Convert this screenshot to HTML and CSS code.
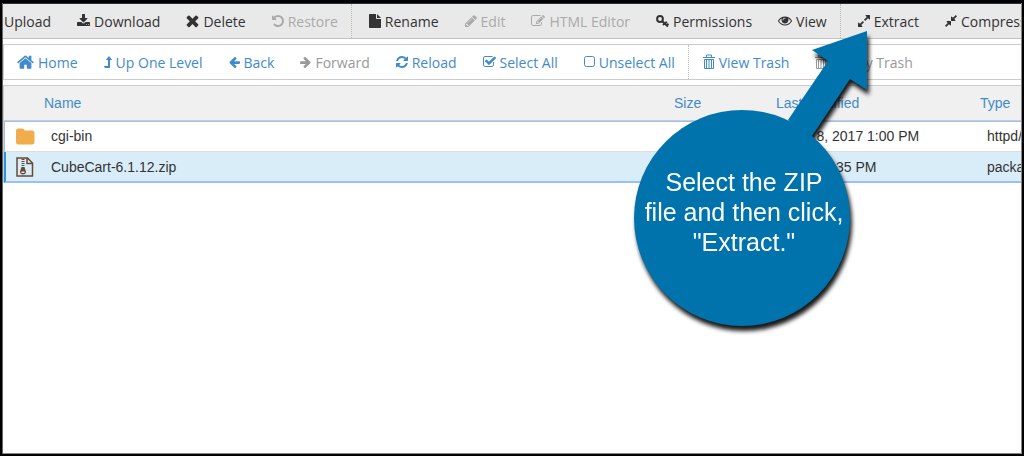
FILE: index.html
```
<!DOCTYPE html>
<html lang="en">

<head>
    <meta charset="UTF-8">
    <meta name="viewport" content="width=device-width, initial-scale=1.0">
    <title>File Manager</title>
    <link rel="stylesheet" href="styles.css">
</head>

<body>
    <div class="frame">
        <div class="toolbar">
            <button class="first">Upload</button>
            <button><svg width="13" height="14" viewBox="64 0 1664 1792"><path d="M1344 1344q0-26-19-45t-45-19-45 19-19 45 19 45 45 19 45-19 19-45zm256 0q0-26-19-45t-45-19-45 19-19 45 19 45 45 19 45-19 19-45zm128-224v320q0 40-28 68t-68 28h-1472q-40 0-68-28t-28-68v-320q0-40 28-68t68-28h465l135 136q58 56 136 56t136-56l136-136h464q40 0 68 28t28 68zm-325-569q17 41-14 70l-448 448q-18 19-45 19t-45-19l-448-448q-31-29-14-70 17-39 59-39h256v-448q0-26 19-45t45-19h256q26 0 45 19t19 45v448h256q42 0 59 39z"/></svg>Download</button>
            <button><svg width="13" height="14" viewBox="240 220 1312 1412"><path d="M1490 1322q0 40-28 68l-136 136q-28 28-68 28t-68-28l-294-294-294 294q-28 28-68 28t-68-28l-136-136q-28-28-28-68t28-68l294-294-294-294q-28-28-28-68t28-68l136-136q28-28 68-28t68 28l294 294 294-294q28-28 68-28t68 28l136 136q28 28 28 68t-28 68l-294 294 294 294q28 28 28 68z"/></svg>Delete</button>
            <button disabled><svg width="12" height="14" viewBox="128 0 1536 1792"><path d="M1664 896q0 156-61 298t-164 245-245 164-298 61q-172 0-327-72.5t-264-204.5q-7-10-6.5-22.5t8.5-20.5l137-138q10-9 25-9 16 2 23 12 73 95 179 147t225 52q104 0 198.5-40.5t163.5-109.5 109.5-163.5 40.5-198.5-40.5-198.5-109.5-163.5-163.5-109.5-198.5-40.5q-98 0-188 35.5t-160 101.5l137 138q31 30 14 69-17 40-59 40h-448q-26 0-45-19t-19-45v-448q0-42 40-59 39-17 69 14l130 129q107-101 244.5-156.5t284.5-55.5q156 0 298 61t245 164 164 245 61 298z"/></svg>Restore</button>
            <span class="divider"></span>
            <button><svg width="12" height="14" viewBox="0 0 12 14"><path d="M0 .8Q0 0 .8 0H7v4.200q0 .8.8.8H12v8.200q0 .8-.8.8H.8Q0 14 0 13.200zM8 0l4 4H8z"/></svg>Rename</button>
            <button disabled><svg width="12" height="14" viewBox="128 0 1536 1792"><path d="M491 1536l91-91-235-235-91 91v107h128v128h107zm523-928q0-22-22-22-10 0-17 7l-542 542q-7 7-7 17 0 22 22 22 10 0 17-7l542-542q7-7 7-17zm-54-192l416 416-832 832h-416v-416zm683 96q0 53-37 90l-166 166-416-416 166-165q36-38 90-38 53 0 91 38l235 234q37 39 37 91z"/></svg>Edit</button>
            <button disabled><svg width="14" height="14" viewBox="0 0 1792 1792"><path d="M888 1184l116-116-152-152-116 116v56h96v96h56zm440-720q-16-16-33 1l-350 350q-17 17-1 33t33-1l350-350q17-17 1-33zm80 594v190q0 119-84.500 203.500t-203.500 84.500h-832q-119 0-203.500-84.500t-84.500-203.500v-832q0-119 84.500-203.500t203.500-84.500h832q63 0 117 25 15 7 18 23 3 17-9 29l-49 49q-14 14-32 8-23-6-45-6h-832q-66 0-113 47t-47 113v832q0 66 47 113t113 47h832q66 0 113-47t47-113v-126q0-13 9-22l64-64q15-15 35-7t20 29zm-96-738l288 288-672 672h-288v-288zm444 132l-92 92-288-288 92-92q28-28 68-28t68 28l152 152q28 28 28 68t-28 68z"/></svg>HTML Editor</button>
            <button><svg width="13" height="14" viewBox="0 0 13 14"><circle cx="4" cy="5" r="2.900" class="line"/><path d="M6 7l6 5.500M8.500 9.500l-1.500 1.500M10.800 7.800l-1.800 1.800M12.400 9.600l-1.500 1.700" class="line"/></svg>Permissions</button>
            <button><svg width="14" height="14" viewBox="0 64 1792 1792"><path d="M1664 960q-152-236-381-353 61 104 61 225 0 185-131.500 316.500t-316.500 131.500-316.500-131.500-131.500-316.500q0-121 61-225-229 117-381 353 133 205 333.500 326.500t434.500 121.500 434.500-121.500 333.500-326.500zm-720-384q0-20-14-34t-34-14q-125 0-214.500 89.500t-89.500 214.500q0 20 14 34t34 14 34-14 14-34q0-86 61-147t147-61q20 0 34-14t14-34zm848 384q0 34-20 69-140 230-376.500 368.500t-499.500 138.500-499.500-139-376.500-368q-20-35-20-69t20-69q140-229 376.500-368t499.500-139 499.500 139 376.500 368q20 35 20 69z"/></svg>View</button>
            <span class="divider"></span>
            <button><svg width="12" height="14" viewBox="128 0 1536 1792"><path d="M883 1056q0 13-10 23l-332 332 144 144q19 19 19 45t-19 45-45 19h-448q-26 0-45-19t-19-45v-448q0-26 19-45t45-19 45 19l144 144 332-332q10-10 23-10t23 10l114 114q10 10 10 23zm781-864v448q0 26-19 45t-45 19-45-19l-144-144-332 332q-10 10-23 10t-23-10l-114-114q-10-10-10-23t10-23l332-332-144-144q-19-19-19-45t19-45 45-19h448q26 0 45 19t19 45z"/></svg>Extract</button>
            <button><svg width="12" height="14" viewBox="128 0 1536 1792"><path d="M896 960v448q0 26-19 45t-45 19-45-19l-144-144-332 332q-10 10-23 10t-23-10l-114-114q-10-10-10-23t10-23l332-332-144-144q-19-19-19-45t19-45 45-19h448q26 0 45 19t19 45zm755-672q0 13-10 23l-332 332 144 144q19 19 19 45t-19 45-45 19h-448q-26 0-45-19t-19-45v-448q0-26 19-45t45-19 45 19l144 144 332-332q10-10 23-10t23 10l114 114q10 10 10 23z"/></svg>Compress</button>
        </div>

        <div class="toolbar nav">
            <button><svg width="17" height="17" viewBox="64 160 1664 1536"><path d="M1472 992v480q0 26-19 45t-45 19h-384v-384h-256v384h-384q-26 0-45-19t-19-45v-480q0-1 .5-3t.5-3l575-474 575 474q1 2 1 6zm223-69l-62 74q-8 9-21 11h-3q-13 0-21-7l-692-577-692 577q-12 8-24 7-13-2-21-11l-62-74q-8-10-7-23.500t11-21.500l719-599q32-26 76-26t76 26l244 204v-195q0-14 9-23t23-9h192q14 0 23 9t9 23v408l219 182q10 8 11 21.500t-7 23.500z"/></svg>Home</button>
            <button><svg width="8" height="14" viewBox="0 0 8 14"><path d="M5 1L8.200 5H6v8H.8L0 11h4V5H1.800z"/></svg>Up One Level</button>
            <button><svg width="11" height="13" viewBox="128 64 1536 1792"><path d="M1664 896v128q0 53-32.500 90.500t-84.500 37.500h-704l293 294q38 36 38 90t-38 90l-75 76q-37 37-90 37-52 0-91-37l-651-652q-37-37-37-90 0-52 37-91l651-650q38-38 91-38 52 0 90 38l75 74q38 38 38 91t-38 91l-293 293h704q52 0 84.500 37.500t32.500 90.500z"/></svg>Back</button>
            <button disabled><svg width="11" height="13" viewBox="128 64 1536 1792"><path transform="translate(1792 0) scale(-1 1)" d="M1664 896v128q0 53-32.500 90.500t-84.500 37.500h-704l293 294q38 36 38 90t-38 90l-75 76q-37 37-90 37-52 0-91-37l-651-652q-37-37-37-90 0-52 37-91l651-650q38-38 91-38 52 0 90 38l75 74q38 38 38 91t-38 91l-293 293h704q52 0 84.500 37.500t32.500 90.500z"/></svg>Forward</button>
            <button><svg width="12" height="14" viewBox="128 0 1536 1792"><path d="M1639 1056q0 5-1 7-64 268-268 434.500t-478 166.500q-146 0-282.500-55t-243.500-157l-129 129q-19 19-45 19t-45-19-19-45v-448q0-26 19-45t45-19h448q26 0 45 19t19 45-19 45l-137 137q71 66 161 102t187 36q134 0 250-65t186-179q11-17 53-117 8-23 30-23h192q13 0 22.500 9.500t9.500 22.500zm25-800v448q0 26-19 45t-45 19h-448q-26 0-45-19t-19-45 19-45l138-138q-148-137-349-137-134 0-250 65t-186 179q-11 17-53 117-8 23-30 23h-199q-13 0-22.500-9.500t-9.500-22.500v-7q65-268 270-434.500t480-166.500q146 0 284 55.500t245 156.500l130-129q19-19 45-19t45 19 19 45z"/></svg>Reload</button>
            <button><svg width="13" height="14" viewBox="64 0 1664 1792"><path d="M1472 930v318q0 119-84.500 203.500t-203.500 84.500h-832q-119 0-203.500-84.500t-84.500-203.500v-832q0-119 84.500-203.500t203.500-84.500h832q63 0 117 25 15 7 18 23 3 17-9 29l-49 49q-10 10-23 10-3 0-9-2-23-6-45-6h-832q-66 0-113 47t-47 113v832q0 66 47 113t113 47h832q66 0 113-47t47-113v-254q0-13 9-22l64-64q10-10 23-10 6 0 12 3 20 8 20 29zm231-489l-814 814q-24 24-57 24t-57-24l-430-430q-24-24-24-57t24-57l110-110q24-24 57-24t57 24l263 263 647-647q24-24 57-24t57 24l110 110q24 24 24 57t-24 57z"/></svg>Select All</button>
            <button><svg width="11" height="14" viewBox="0 0 11 14"><rect x=".5" y="1.500" width="10" height="10" rx="2" class="thin"/></svg>Unselect All</button>
            <span class="divider"></span>
            <button><svg width="12" height="16" viewBox="0 0 12 16"><path d="M0 3.500h12M3.500 3V1h5v2M1.500 5.500h9v9h-9zM3.500 5v9M6 5v9M8.500 5v9" class="thin"/></svg>View Trash</button>
            <button disabled><svg width="12" height="16" viewBox="0 0 12 16"><path d="M0 3.500h12M3.500 3V1h5v2M1.500 5.500h9v9h-9zM3.500 5v9M6 5v9M8.500 5v9" class="thin"/></svg>Empty Trash</button>
        </div>

        <table class="files">
            <colgroup>
                <col class="col-icon">
                <col>
                <col class="col-size">
                <col class="col-date">
                <col class="col-type">
            </colgroup>
            <thead>
                <tr>
                    <th></th>
                    <th>Name</th>
                    <th>Size</th>
                    <th>Last Modified</th>
                    <th>Type</th>
                </tr>
            </thead>
            <tbody>
                <tr>
                    <td class="icon"><svg width="19" height="17" viewBox="0 0 19 17"><path fill="#f0ad4e" d="M0 3q0-2.500 2.500-2.500H6Q8.500.5 8.500 2.500H16q2.500 0 2.500 2.500v9q0 2.500-2.500 2.500H2.500Q0 16.500 0 14z"/></svg></td>
                    <td>cgi-bin</td>
                    <td></td>
                    <td>Apr 18, 2017 1:00 PM</td>
                    <td>httpd/unix-directory</td>
                </tr>
                <tr class="selected">
                    <td class="icon"><svg width="18" height="20" viewBox="0 0 18 20"><path fill="none" stroke="#6b4a35" stroke-width="1.500" d="M1 1h10.500l5 5v13H1zM11 1v5.500h5.500"/><path fill="none" stroke="#6b4a35" stroke-width="3" stroke-dasharray="1 1" d="M7 2v8"/><path fill="#6b4a35" fill-rule="evenodd" d="M5.500 10h3l1.500 4.500Q10 17.500 7 17.500T4 14.500zM5.500 14.500h3v1.500h-3z"/></svg></td>
                    <td>CubeCart-6.1.12.zip</td>
                    <td></td>
                    <td>Today 2:35 PM</td>
                    <td>package/x-generic</td>
                </tr>
            </tbody>
        </table>
    </div>

    <div class="callout">
        <svg class="arrow" width="80" height="110" viewBox="0 0 80 110"><path d="M79 1L24 20l16 11L0 90l24 16 38-57 17 11z"/></svg>
        <p class="bubble">Select the ZIP<br>file and then click,<br>"Extract."</p>
    </div>
</body>

</html>
```
FILE: styles.css
```
* {
    box-sizing: border-box;
}

body {
    margin: 0;
    background: #000;
    font-family: "Liberation Sans", Arial, sans-serif;
    font-size: 14px;
    color: #333;
}

.frame {
    min-height: 100vh;
    background: #fff;
    background-clip: padding-box;
    border: 2px solid #000;
    border-top: 3px solid #000;
    box-shadow: inset 1px 0 #666, inset -1px -1px #888, inset 0 1px #26323d;
    padding: 1px;
    overflow: hidden;
}

/* Toolbars */
.toolbar {
    display: flex;
    height: 35px;
    background: #e9e9e9;
    border-bottom: 1px solid #bfc3c8;
    overflow: hidden;
}

.toolbar button {
    display: flex;
    flex: none;
    align-items: center;
    gap: 4px;
    padding: 0 13px;
    border: none;
    background: none;
    color: #333;
    font-family: "Open Sans", sans-serif;
    font-size: 14px;
    white-space: nowrap;
    cursor: pointer;
}

.toolbar button.first {
    padding-left: 1px;
}

.toolbar button:disabled {
    color: #aaa;
    cursor: default;
}

.toolbar svg {
    fill: currentColor;
}

.toolbar .line {
    fill: none;
    stroke: currentColor;
    stroke-width: 2;
}

.toolbar .thin {
    fill: none;
    stroke: currentColor;
    stroke-width: 1;
}

.divider {
    flex: none;
    border-left: 1px dotted #bbb;
    margin-right: 4px;
}

.nav {
    height: 36px;
    margin: 5px 0;
    background: #fff;
    border: 1px solid #ccc;
    border-right: none;
}

.nav button {
    color: #428bca;
}

.nav button:disabled {
    color: #999;
}

.nav .divider {
    margin-right: 1px;
}

/* File list */
.files {
    width: 100%;
    table-layout: fixed;
    border-collapse: separate;
    border-spacing: 0;
    border-left: 1px solid #ccc;
}

.col-icon {
    width: 40px;
}

.col-size {
    width: 102px;
}

.col-date {
    width: 204px;
}

.col-type {
    width: 41px;
}

.files th {
    height: 36px;
    padding: 0;
    background: #f0f0f0;
    border-top: 1px solid #ccc;
    border-bottom: 1px solid #ccc;
    color: #428bca;
    font-weight: normal;
    text-align: left;
    white-space: nowrap;
}

.files td {
    height: 31px;
    padding: 0 0 1px 7px;
    border-top: 1px solid #9bbff9;
    border-bottom: 1px solid #ddd;
    white-space: nowrap;
    overflow: hidden;
}

.files .icon {
    padding-left: 11px;
    border-left: 1px solid #9bbff9;
}

.files svg {
    display: block;
}

.files .selected td {
    padding-bottom: 0;
    background: #d9edf9;
    border-top: none;
    border-bottom: 2px solid #9bbff9;
}

.files .selected .icon {
    padding-left: 10px;
    border-left: 2px solid #2196e3;
}

/* Callout over the list, pointing at Extract */
.callout {
    position: absolute;
    left: 634px;
    top: 30px;
    filter: drop-shadow(2px 5px 2px rgba(0, 0, 0, 0.9));
}

.arrow {
    position: absolute;
    left: 154px;
    top: 0;
    fill: #0073ac;
}

.bubble {
    display: flex;
    align-items: center;
    justify-content: center;
    width: 216px;
    height: 216px;
    margin: 80px 0 0;
    padding: 0 0 12px 4px;
    border-radius: 50%;
    background: #0073ac;
    color: #fff;
    font-size: 25px;
    line-height: 30px;
    text-align: center;
    white-space: nowrap;
}
```
